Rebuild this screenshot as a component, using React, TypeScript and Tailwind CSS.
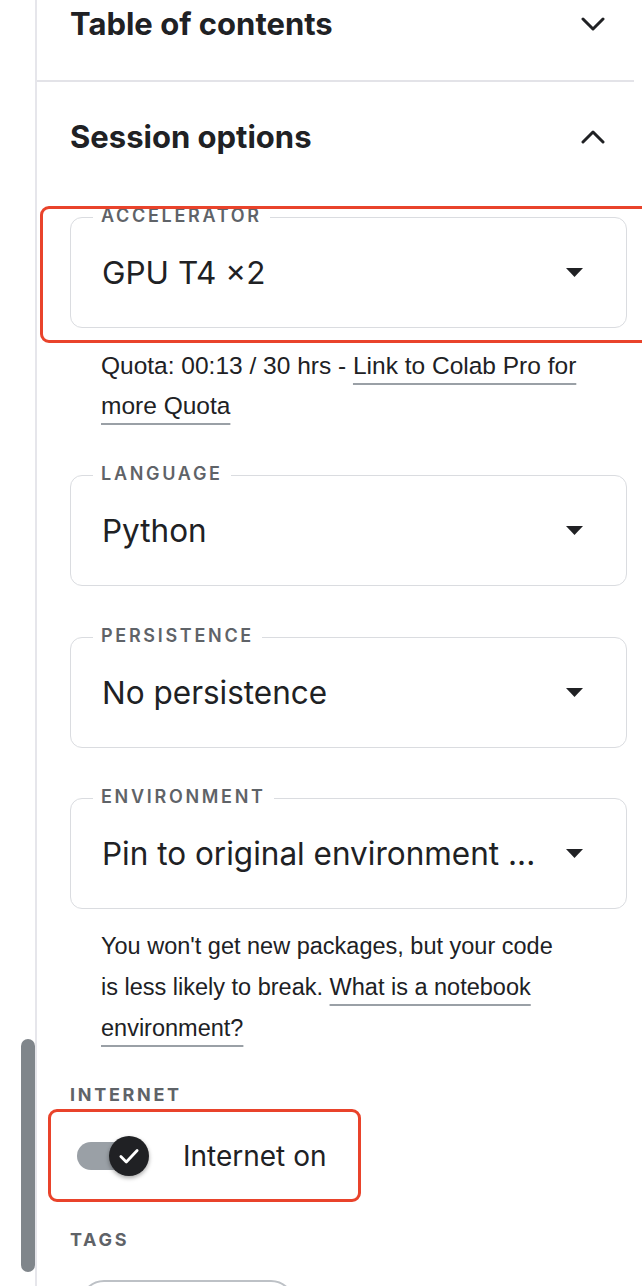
import { ReactNode } from 'react';

const inter = { fontFamily: 'Inter, Roboto, "Noto Sans", sans-serif' };
const arial = { fontFamily: '"Liberation Sans", Arial, sans-serif' };

function Chevron({ up }: { up?: boolean }) {
  return (
    <svg width="24" height="14" viewBox="0 0 24 14" className="shrink-0">
      <polyline
        points={up ? '2,12 12,2 22,12' : '2,2 12,12 22,2'}
        fill="none"
        stroke="#202124"
        strokeWidth="3"
        strokeLinecap="round"
        strokeLinejoin="round"
      />
    </svg>
  );
}

function Caret() {
  return (
    <svg width="17" height="9" viewBox="0 0 17 9" className="shrink-0">
      <polygon points="0,0 17,0 8.5,9" fill="#202124" />
    </svg>
  );
}

function Field({ label, value, highlight }: { label: string; value: string; highlight?: boolean }) {
  return (
    <div className="relative">
      <div className="h-[111px] rounded-[12px] border-[1.5px] border-[#dadce0] flex items-center justify-between pl-[31px] pr-[43px]">
        <span className="text-[31.5px] text-[#202124] truncate">{value}</span>
        <Caret />
      </div>
      <span className="absolute left-[23px] -top-[12px] bg-white px-2 text-[18px] leading-[22px] font-semibold tracking-[0.15em] text-[#5f6368]">
        {label}
      </span>
      {highlight && (
        <div className="absolute -left-[30px] -top-[11px] w-[610px] h-[137px] rounded-[9px] border-[3.5px] border-[#e9432b]" />
      )}
    </div>
  );
}

function Link({ children }: { children: ReactNode }) {
  return (
    <span className="underline decoration-2 underline-offset-[9px] decoration-[#9aa0a6]">{children}</span>
  );
}

function SectionLabel({ children }: { children: ReactNode }) {
  return (
    <div className="text-[18px] leading-[20px] font-bold tracking-[0.15em] text-[#5f6368]">{children}</div>
  );
}

export default function App() {
  return (
    <div style={inter} className="w-[642px] h-[1286px] bg-white overflow-hidden flex text-[#202124]">
      <div className="w-[35px] shrink-0 pt-[1039px] pl-[21px]">
        <div className="w-[14px] h-[233px] rounded-full bg-[#80868b]" />
      </div>

      <div className="flex-1 border-l-2 border-[#e6e6eb] flex flex-col">
        <div className="mr-[8px] border-b-2 border-[#e3e3e8] pb-[32px]">
          <div className="h-[48px] flex items-center justify-between pl-[33px] pr-[29px]">
            <span className="text-[31px] font-bold">Table of contents</span>
            <Chevron />
          </div>
        </div>

        <div className="pl-[33px] pr-[15px]">
          <div className="mt-[31px] h-[48px] flex items-center justify-between pr-[22px]">
            <span className="text-[31px] font-bold">Session options</span>
            <Chevron up />
          </div>

          <div className="mt-[56px]">
            <Field label="ACCELERATOR" value="GPU T4 ×2" highlight />
          </div>
          <p style={arial} className="mt-[18px] pl-[31px] pr-[20px] text-[24.5px] leading-[40px]">
            Quota: 00:13 / 30 hrs - <Link>Link to Colab Pro for more Quota</Link>
          </p>

          <div className="mt-[49px]">
            <Field label="LANGUAGE" value="Python" />
          </div>
          <div className="mt-[51px]">
            <Field label="PERSISTENCE" value="No persistence" />
          </div>
          <div className="mt-[50px]">
            <Field label="ENVIRONMENT" value="Pin to original environment ..." />
          </div>
          <p style={arial} className="mt-[17px] pl-[31px] pr-[70px] text-[23.5px] leading-[41px]">
            You won't get new packages, but your code is less likely to break.{' '}
            <Link>What is a notebook environment?</Link>
          </p>

          <div className="mt-[36px]">
            <SectionLabel>INTERNET</SectionLabel>
          </div>
          <div className="relative mt-[27px] h-[48px] flex items-center pl-[7px]">
            <div className="w-[52px] h-[28px] rounded-full bg-[#9aa0a6]" />
            <div className="w-[40px] h-[40px] -ml-[20px] rounded-full bg-[#202124] shadow-[0_2px_4px_rgba(0,0,0,0.35)] flex items-center justify-center">
              <svg width="26" height="26" viewBox="0 0 24 24">
                <polyline points="4.5,12.5 9.5,17.5 19.5,7" fill="none" stroke="#fff" strokeWidth="2.6" strokeLinecap="round" strokeLinejoin="round" />
              </svg>
            </div>
            <span className="ml-[34px] text-[28px]">Internet on</span>
            <div className="absolute -left-[22px] -top-[23px] w-[313px] h-[93px] rounded-[9px] border-[3.5px] border-[#e9432b]" />
          </div>

          <div className="mt-[50px]">
            <SectionLabel>TAGS</SectionLabel>
          </div>
          <div className="mt-[30px] ml-[10px] w-[215px] h-[48px] rounded-full border-2 border-[#bdc1c6]" />
        </div>
      </div>
    </div>
  );
}
